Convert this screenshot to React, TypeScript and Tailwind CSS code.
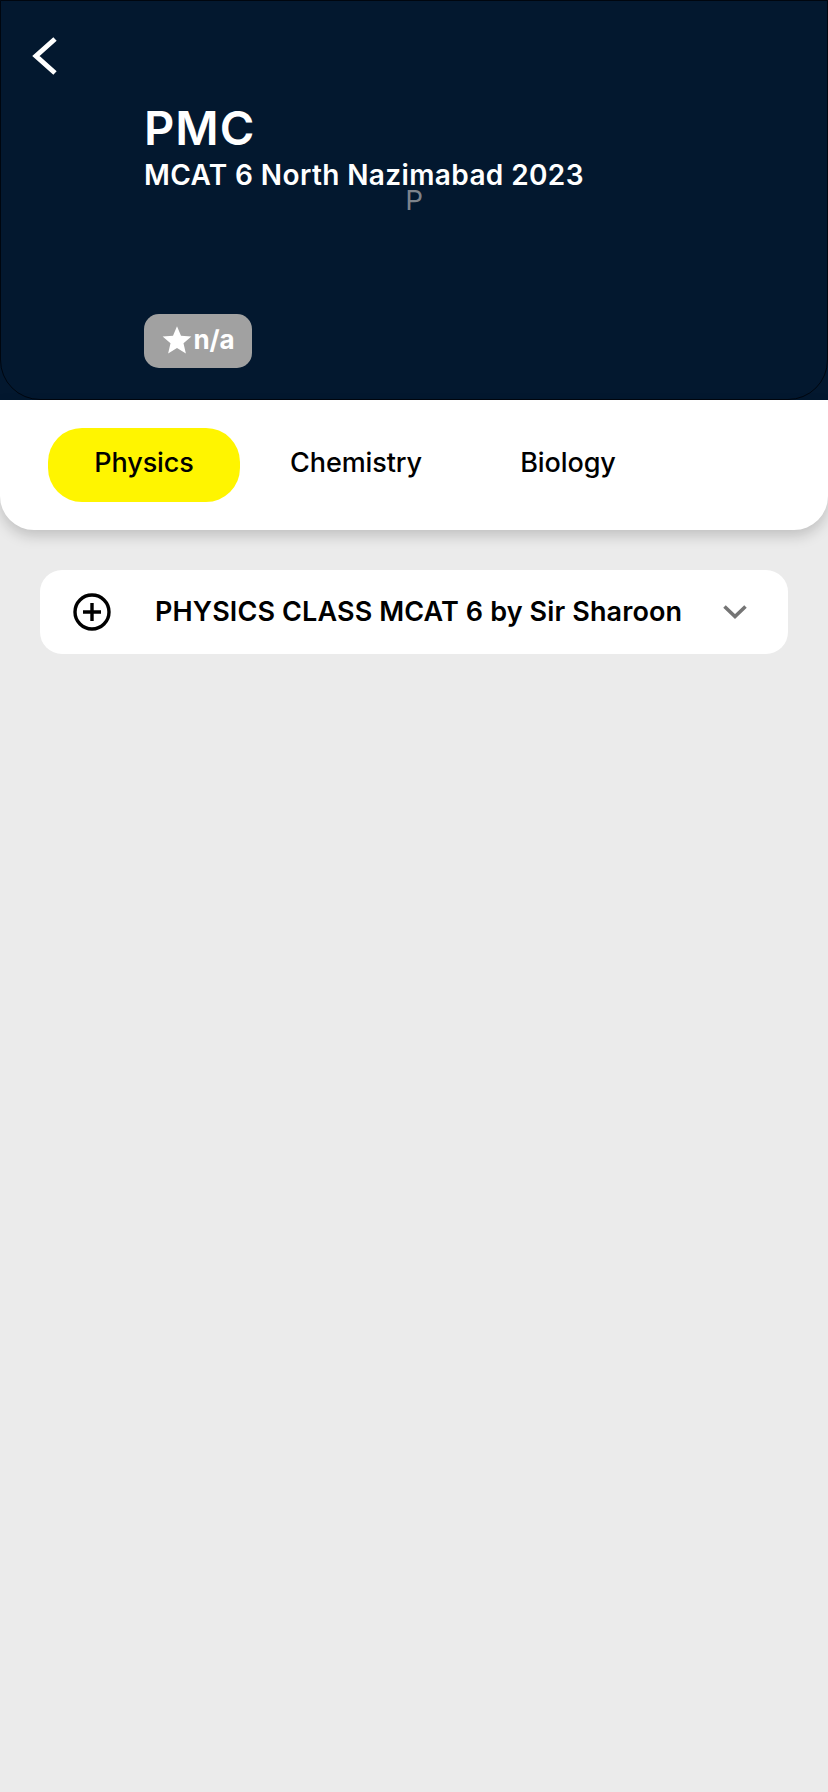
import React from 'react';

const tabs = ['Physics', 'Chemistry', 'Biology'];

const App: React.FC = () => {
  return (
    <div className="min-h-[1792px] bg-[#ebebeb] font-['Inter',sans-serif] overflow-hidden">
      <div className="bg-[#03182f]">
        <div className="relative h-[400px] rounded-b-[40px] border border-[#00060f] pl-[143px] pt-[102px]">
          <svg className="absolute left-[28px] top-[34px]" width="32" height="42" viewBox="0 0 32 42" fill="none">
            <path d="M26 4 L7 21 L26 38" stroke="#ffffff" strokeWidth="5" />
          </svg>
          <div className="text-[47px] leading-[50px] font-semibold tracking-[1px] text-white">PMC</div>
          <div className="text-[28px] leading-[36px] font-semibold tracking-[0.38px] text-white mt-[4px]">MCAT 6 North Nazimabad 2023</div>
          <div className="absolute left-0 right-0 top-[183px] text-center text-[27px] leading-[34px] font-['Roboto',sans-serif] text-[#7d838b]">P</div>
          <div className="absolute left-[143px] top-[313px] w-[108px] h-[54px] rounded-[15px] bg-[#a1a1a1] flex items-center justify-center gap-[2px] pb-[2px]">
            <svg width="30" height="30" viewBox="0 0 24 24" fill="#ffffff">
              <path d="M12 1 L15.200 8.500 L23.500 9.200 L17.200 14.600 L19.100 22.800 L12 18.400 L4.900 22.800 L6.800 14.600 L0.500 9.200 L8.800 8.500 Z" />
            </svg>
            <span className="text-[26px] leading-none font-bold tracking-[-0.2px] text-white">n/a</span>
          </div>
        </div>
      </div>

      <div className="relative flex h-[130px] gap-[20px] rounded-b-[34px] bg-white pl-[48px] pt-[28px] shadow-[0_6px_14px_rgba(0,0,0,0.18)]">
        {tabs.map((tab, i) => (
          <div
            key={tab}
            className={`flex h-[74px] w-[192px] items-center justify-center rounded-[34px] pb-[4px] text-[27px] font-medium tracking-[-0.1px] text-black ${
              i === 0 ? 'bg-[#fff500]' : ''
            }`}
          >
            {tab}
          </div>
        ))}
      </div>

      <div className="mx-[40px] mt-[40px] flex h-[84px] items-center rounded-[22px] bg-white">
        <svg className="ml-[33px] shrink-0" width="38" height="38" viewBox="0 0 38 38" fill="none" stroke="#000000" strokeWidth="3.4">
          <circle cx="19" cy="19" r="17" />
          <path d="M19 10 V28 M10 19 H28" />
        </svg>
        <span className="ml-[44px] whitespace-nowrap text-[27px] font-semibold tracking-[0.12px] text-black">PHYSICS CLASS MCAT 6 by Sir Sharoon</span>
        <svg className="ml-[41px] shrink-0" width="24" height="14" viewBox="0 0 24 14" fill="none" stroke="#757575" strokeWidth="3.6">
          <path d="M1.500 1.500 L12 11.500 L22.500 1.500" />
        </svg>
      </div>
    </div>
  );
};

export default App;
